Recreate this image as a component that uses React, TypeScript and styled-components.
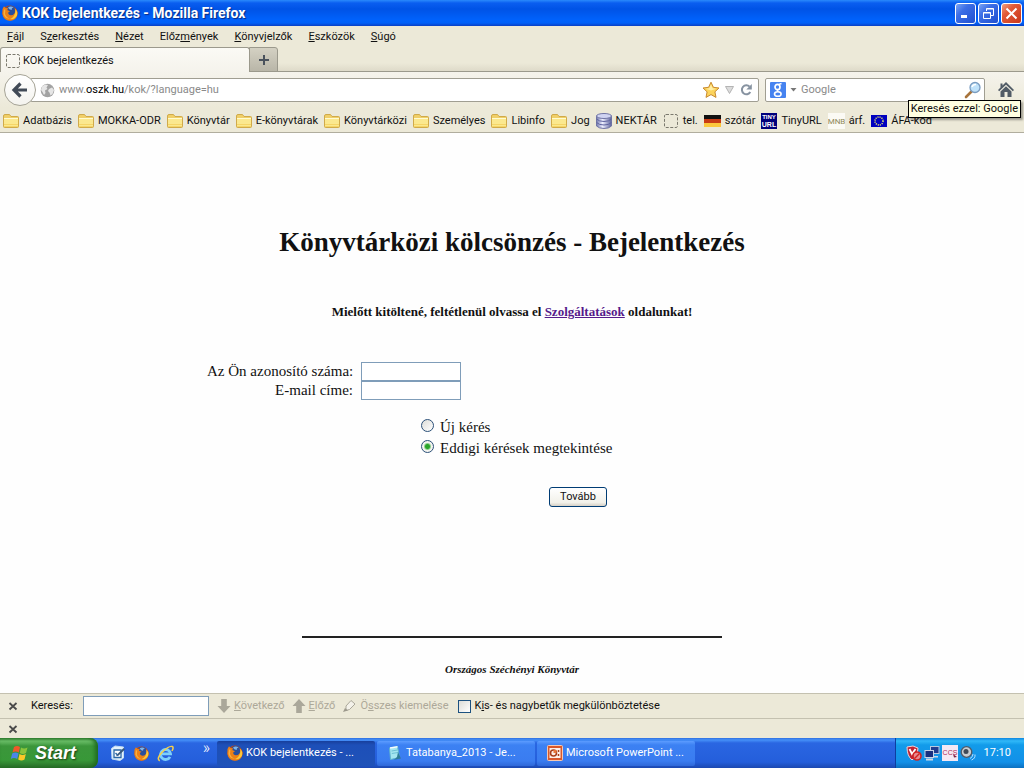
import React from "react";
import styled, { createGlobalStyle, css } from "styled-components";

const ui = `Roboto, "Noto Sans", sans-serif`;
const serif = `"Liberation Serif", serif`;

const GlobalStyle = createGlobalStyle`
  *, *::before, *::after { box-sizing: border-box; }
  body { margin: 0; background: #fefefe; }
  button, input { font: inherit; color: inherit; }
  svg { display: block; flex: none; }
`;

const Screen = styled.div`
  min-height: 100vh;
  display: flex;
  flex-direction: column;
  font: 11px/16px ${ui};
  color: #111;
  overflow-x: hidden;
`;

/* ---------- window frame ---------- */

const TitleBar = styled.header`
  height: 26px;
  display: flex;
  align-items: center;
  gap: 4px;
  padding: 0 2px;
  color: #fff;
  background: linear-gradient(#2a8afc 0, #0a5ef0 3px, #0053e6 9px, #0062fc 20px, #0060f8 23px, #0a3fc4 26px);
`;

const Title = styled.h1`
  flex: 1;
  margin: 0;
  font: bold 14px/20px Roboto, sans-serif;
  text-shadow: 1px 1px 1px #0a2a80;
`;

const WindowButtons = styled.div`
  display: flex;
  gap: 2px;
`;

const WindowButton = styled.button<{ $close?: boolean }>`
  width: 21px;
  height: 21px;
  padding: 0;
  display: grid;
  place-items: center;
  border: 1px solid #fff;
  border-radius: 3px;
  background: ${(p) =>
    p.$close
      ? "linear-gradient(135deg, #f0a080 0, #e25a38 35%, #c8371a 100%)"
      : "linear-gradient(135deg, #7ba5f5 0, #3c6ee6 35%, #1f4fd0 100%)"};
`;

const bare = css`
  border: 0;
  padding: 0;
  background: none;
  text-decoration: none;
  color: inherit;
  white-space: nowrap;
`;

const MenuBar = styled.nav`
  height: 21px;
  display: flex;
  align-items: center;
  gap: 16px;
  padding: 0 7px;
  background: #ece9d8;
`;

const MenuItem = styled.button`
  ${bare}
`;

const TabStrip = styled.div`
  height: 25px;
  display: flex;
  background: linear-gradient(#ece9d8 16px, #dedac9 24px);
  box-shadow: inset 0 -1px #9b998c;
`;

const Tab = styled.button`
  ${bare}
  width: 250px;
  display: flex;
  align-items: center;
  gap: 2px;
  padding: 2px 4px 0;
  text-align: left;
  border: 1px solid #9b998c;
  border-bottom: 0;
  border-radius: 3px 3px 0 0;
  background: linear-gradient(#fbfaf5, #f5f3ec);
`;

const NewTab = styled.button`
  ${bare}
  width: 29px;
  display: grid;
  place-items: center;
  margin-left: -1px;
  border: 1px solid #9b998c;
  border-radius: 0 3px 0 0;
  background: linear-gradient(#d4d1c3, #b9b6a8);
`;

const NavBar = styled.div`
  position: relative;
  height: 36px;
  display: flex;
  align-items: center;
  padding: 0 10px 0 4px;
  background: linear-gradient(#f5f3ec, #ece9d8);
`;

const BackButton = styled.button`
  ${bare}
  position: relative;
  z-index: 1;
  width: 32px;
  height: 32px;
  flex: none;
  display: grid;
  place-items: center;
  margin-right: -6px;
  border: 1px solid #a5a396;
  border-radius: 50%;
  background: linear-gradient(#fff, #f4f3ee);
`;

const Field = styled.div`
  height: 24px;
  display: flex;
  align-items: center;
  border: 1px solid #a09e92;
  border-radius: 2px;
  background: #fff;
`;

const AddressField = styled(Field)`
  flex: 1;
  gap: 4px;
  padding: 0 5px 0 9px;
`;

const Address = styled.div`
  flex: 1;
  color: #8a8a8a;
  b {
    font-weight: normal;
    color: #000;
  }
`;

const SearchField = styled(Field)`
  width: 220px;
  margin-left: 6px;
  padding: 0 2px 0 4px;
  gap: 4px;
`;

const SearchInput = styled.input`
  flex: 1;
  min-width: 0;
  border: 0;
  padding: 0;
  outline: 0;
  background: none;
  &::placeholder { color: #8a8a8a; opacity: 1; }
`;

const IconButton = styled.button`
  ${bare}
  display: grid;
  place-items: center;
`;

const HomeButton = styled(IconButton)`
  margin-left: 13px;
`;

const Tooltip = styled.div`
  position: absolute;
  z-index: 2;
  top: 28px;
  right: 3px;
  padding: 0 2px;
  border: 1px solid #000;
  background: #ffffe1;
  box-shadow: 2px 2px 2px #0005;
  white-space: nowrap;
`;

const BookmarkBar = styled.nav`
  height: 25px;
  display: flex;
  align-items: center;
  gap: 6px;
  padding: 2px 3px 0;
  background: #ece9d8;
  border-bottom: 1px solid #b0ad9e;
`;

const bookmark = css`
  ${bare}
  display: flex;
  align-items: center;
  gap: 4px;
`;

const BookmarkFolder = styled.button`
  ${bookmark}
`;

const BookmarkLink = styled.a`
  ${bookmark}
`;

/* ---------- page ---------- */

const Page = styled.main`
  flex: 1;
  display: flex;
  flex-direction: column;
  align-items: center;
  padding: 92px 8px 16px;
  font: 15px/19px ${serif};
  background: #fefefe;
`;

const Heading = styled.h2`
  margin: 0;
  font-size: 27px;
  line-height: 34px;
`;

const Notice = styled.p`
  margin: 45px 0 42px;
  font-size: 13px;
  line-height: 16px;
  font-weight: bold;
  a { color: #551a8b; }
`;

const LoginForm = styled.form`
  width: 100%;
  max-width: 610px;
  display: flex;
  flex-direction: column;
`;

const Fields = styled.div`
  display: grid;
  grid-template-columns: 146px 100px;
  column-gap: 8px;
  label {
    text-align: right;
    white-space: nowrap;
  }
`;

const TextInput = styled.input`
  height: 19px;
  padding: 1px 3px;
  border: 1px solid #7f9db9;
  background: #fff;
`;

const Choices = styled.div`
  display: flex;
  flex-direction: column;
  gap: 2px;
  margin: 18px 0 0 214px;
`;

const Choice = styled.label`
  display: flex;
  align-items: center;
  gap: 6px;
`;

const Radio = styled.input`
  appearance: none;
  width: 13px;
  height: 13px;
  margin: 0 0 4px;
  border: 1px solid #2b5078;
  border-radius: 50%;
  background: linear-gradient(135deg, #dcdcd7, #fff);
  &:checked {
    background: radial-gradient(circle, #2aa52a 0 2px, #8fd08f 3px, #f4f4f0 4px);
  }
`;

const Submit = styled.button`
  width: 58px;
  height: 20px;
  margin: 29px 0 0 342px;
  padding: 0;
  font: 11px/16px ${ui};
  border: 1px solid #003c74;
  border-radius: 3px;
  background: linear-gradient(#fff, #f2f1ea 80%, #d6d0c5);
`;

const PageFooter = styled.footer`
  width: 100%;
  max-width: 420px;
  margin-top: auto;
  padding-top: 23px;
  border-top: 2px solid #222;
  text-align: center;
  font: italic bold 11px/16px ${serif};
`;

/* ---------- find bar ---------- */

const BottomBar = styled.div<{ $tall?: boolean }>`
  height: ${(p) => (p.$tall ? 25 : 20)}px;
  display: flex;
  align-items: center;
  padding: 0 8px;
  background: #ece9d8;
  border-top: 1px solid #c4c1b0;
`;

const FindLabel = styled.label`
  width: 52px;
  margin-left: 13px;
`;

const FindInput = styled.input`
  width: 126px;
  height: 20px;
  margin-right: 8px;
  padding: 1px 3px;
  border: 1px solid #7f9db9;
  background: #fff;
`;

const FindAction = styled.button`
  ${bare}
  display: flex;
  align-items: center;
  gap: 3px;
  margin-right: 7px;
  color: #aca899;
`;

const CheckLabel = styled.label`
  display: flex;
  align-items: center;
  gap: 4px;
  margin-left: 2px;
`;

const CheckBox = styled.input`
  appearance: none;
  width: 13px;
  height: 13px;
  margin: 0;
  border: 1px solid #1c5180;
  background: linear-gradient(135deg, #dcdcd7, #fff);
`;

/* ---------- taskbar ---------- */

const TaskBar = styled.footer`
  height: 30px;
  display: flex;
  color: #fff;
  background: linear-gradient(#2f6fe0 0, #4590f8 2px, #2a66e2 5px, #245edb 24px, #1c48b0 30px);
`;

const StartButton = styled.button`
  ${bare}
  width: 98px;
  display: flex;
  align-items: center;
  gap: 5px;
  padding: 0 0 0 10px;
  border-radius: 0 8px 8px 0;
  font: italic bold 18px/24px "Liberation Sans", sans-serif;
  text-shadow: 1px 1px 2px #1a3a10;
  background: linear-gradient(#3a8a3a 0, #6cc06a 3px, #3b963b 8px, #389838 22px, #2a6e2a 30px);
  box-shadow: inset -3px 0 4px #1f6a1f;
`;

const QuickLaunch = styled.div`
  width: 119px;
  display: flex;
  align-items: center;
  gap: 8px;
  padding-left: 12px;
`;

const More = styled.span`
  margin: 0 7px 10px auto;
  font-size: 16px;
  font-weight: 300;
`;

const Tasks = styled.div`
  flex: 1;
  min-width: 0;
  display: flex;
  align-items: center;
  gap: 2px;
`;

const Task = styled.button<{ $active?: boolean }>`
  ${bare}
  width: 158px;
  height: 25px;
  display: flex;
  align-items: center;
  gap: 3px;
  padding: 0 10px;
  border-radius: 2px;
  background: ${(p) =>
    p.$active
      ? "linear-gradient(#173f9c, #1d4fb8 4px, #1f52b8)"
      : "linear-gradient(#5c9cff, #3c81f3 4px, #3a7cf0 20px, #2f68d8)"};
`;

const Tray = styled.div`
  width: 129px;
  display: flex;
  align-items: center;
  gap: 2px;
  padding: 0 13px 0 10px;
  border-left: 1px solid #0d3ea0;
  background: linear-gradient(#0e86e0 0, #30b8f8 3px, #129bea 7px, #1290e8 24px, #0c70c0 30px);
  time { margin-left: auto; }
`;

/* ---------- icons ---------- */

const FirefoxIcon = ({ size = 16 }: { size?: number }) => (
  <svg width={size} height={size} viewBox="0 0 16 16">
    <circle cx="8" cy="8" r="7.6" fill="#c8480c" />
    <circle cx="8.6" cy="6.4" r="5.6" fill="#2a4f9c" />
    <path d="M6 2.4Q9 .6 11.6 2.6Q9.4 3 9.6 5Q7 4.600 6 2.400Z" fill="#7fb4e8" />
    <path d="M.5 4L2 1.200L3.600 3L6.200 3.200L5.200 5L8 6.200L6.200 7.400Q6.200 10 9 10.300Q13 10 13.200 6L12.600 3Q16 6 15.600 9Q14.400 15.500 8 15.700Q1.500 15.300.4 9Z" fill="#ec8018" />
    <path d="M13.600 4Q16 7 15 10.500Q12.600 14.800 8 14Q13.500 12 13.600 4Z" fill="#fbc93a" />
    <path d="M2 4.500L3.400 4.800L3 9Q4.500 13 8 13.500Q3 14 1.500 9Z" fill="#f9b040" />
  </svg>
);

const DashedIcon = () => (
  <svg width="16" height="16" viewBox="0 0 16 16">
    <rect x="1.500" y="1.500" width="13" height="13" rx="1.500" fill="none" stroke="#7b796e" strokeDasharray="3 1.500" />
  </svg>
);

const FolderIcon = () => (
  <svg width="16" height="16" viewBox="0 0 16 16">
    <path d="M.5 13.500V3Q.5 1.500 2 1.500H6.500L8 3.500H14.500Q15.500 3.500 15.500 4.500V13.500Q15.500 14.500 14.500 14.500H1.500Q.5 14.500.5 13.500Z" fill="#f0cf68" stroke="#d0aa4a" />
    <path d="M1 6H15V14H1Z" fill="#fbe88f" />
    <path d="M1 5.500H15" stroke="#fffbd0" />
    <path d="M1 13.500H15M1 11.500H15" stroke="#f5d568" />
  </svg>
);

const DatabaseIcon = () => (
  <svg width="16" height="16" viewBox="0 0 16 16">
    <defs>
      <linearGradient id="disk">
        <stop offset="0" stopColor="#7278ae" />
        <stop offset=".4" stopColor="#eef0ff" />
        <stop offset="1" stopColor="#5c629c" />
      </linearGradient>
    </defs>
    <path d="M.5 3V13Q3 15.500 8 15.500T15.500 13V3Z" fill="url(#disk)" stroke="#7075a4" />
    <ellipse cx="8" cy="3" rx="7.500" ry="2.500" fill="#d0d4f2" stroke="#7075a4" />
    <path d="M.5 6Q3 8.500 8 8.500T15.500 6M.5 9.500Q3 12 8 12T15.500 9.500" fill="none" stroke="#6065a0" />
  </svg>
);

const GermanFlag = () => (
  <svg width="17" height="16" viewBox="0 0 17 16">
    <rect y="2" width="17" height="4" fill="#111" />
    <rect y="6" width="17" height="4" fill="#c83c14" />
    <rect y="10" width="17" height="4" fill="#fbc83c" />
  </svg>
);

const TinyUrlIcon = () => (
  <svg width="16" height="16" viewBox="0 0 16 16" fontFamily="Liberation Sans" fontWeight="bold" fontSize="7" fill="#fff" textAnchor="middle">
    <rect width="16" height="16" fill="#00007c" />
    <text x="8" y="6" fontSize="6">TINY</text>
    <text x="8" y="14">URL</text>
  </svg>
);

const MnbIcon = () => (
  <svg width="17" height="16" viewBox="0 0 17 16" fontFamily="Roboto" fontSize="8" fill="#8f8858" textAnchor="middle">
    <rect width="17" height="16" fill="#fbfaf4" />
    <text x="8.500" y="11">MNB</text>
  </svg>
);

const EuFlag = () => (
  <svg width="16" height="16" viewBox="0 0 16 16">
    <rect y="2" width="16" height="12" fill="#0000c0" />
    <circle cx="8" cy="8" r="4" fill="none" stroke="#e8e86c" strokeWidth="1.500" strokeDasharray="1.100 1" />
  </svg>
);

const GlobeIcon = () => (
  <svg width="15" height="15" viewBox="0 0 15 15">
    <circle cx="7.500" cy="7.500" r="6.800" fill="#a2a2a2" />
    <path d="M2 3.500L5 1.500L8 2L6.500 4.500L7.500 6L5 7.500L5.500 10L4 12L2.500 9L1 7ZM9 6L12 4.500L14 7L12.500 11L10.500 12.500L9.500 9.500L8 8Z" fill="#e6e6e6" />
  </svg>
);

const BackIcon = () => (
  <svg width="18" height="18" viewBox="0 0 18 18">
    <path d="M9.500 2.500L3 9L9.500 15.500M3.500 9H16" fill="none" stroke="#414a56" strokeWidth="3.200" />
  </svg>
);

const StarIcon = () => (
  <svg width="18" height="18" viewBox="0 0 18 18">
    <path d="M9 1.200L11.400 6.300L17 7L12.900 10.800L14 16.400L9 13.600L4 16.400L5.100 10.800L1 7L6.600 6.300Z" fill="#fcd45c" stroke="#c98a2e" strokeLinejoin="round" />
    <path d="M9 3.500L10.500 7.200L14 7.800L9 9.500L4 7.800L7.400 7.200Z" fill="#ffefa8" />
  </svg>
);

const DropIcon = () => (
  <svg width="11" height="10" viewBox="0 0 11 10">
    <path d="M1.500 1.500H9.500L5.500 8.500Z" fill="#dcdcdc" stroke="#b4b4b4" />
  </svg>
);

const ReloadIcon = () => (
  <svg width="14" height="14" viewBox="0 0 14 14">
    <path d="M10.600 3.600A4.500 4.500 0 1 0 11.300 9" fill="none" stroke="#8793a1" strokeWidth="2" />
    <path d="M12.800 1V6.500H7.300Z" fill="#8793a1" />
  </svg>
);

const GoogleIcon = () => (
  <svg width="16" height="16" viewBox="0 0 16 16">
    <rect width="16" height="16" rx="1" fill="#4683f0" />
    <ellipse cx="7.500" cy="5" rx="2.500" ry="2.700" fill="none" stroke="#fff" strokeWidth="1.700" />
    <path d="M9 2.400L11.500 1.500M8.600 7.300Q6 8.300 8.400 9.400" fill="none" stroke="#fff" strokeWidth="1.400" />
    <ellipse cx="7.800" cy="12" rx="3.300" ry="2.300" fill="none" stroke="#fff" strokeWidth="1.600" />
  </svg>
);

const CaretIcon = () => (
  <svg width="7" height="4" viewBox="0 0 7 4">
    <path d="M.5 0H6.500L3.500 3.500Z" fill="#777" />
  </svg>
);

const MagnifierIcon = () => (
  <svg width="18" height="18" viewBox="0 0 18 18">
    <path d="M7.500 10.500L2 16" stroke="#a8743c" strokeWidth="2.600" strokeLinecap="round" />
    <circle cx="11" cy="6.500" r="5" fill="#bfe2fa" stroke="#7a9cc0" strokeWidth="1.300" />
    <path d="M8 6Q9 3.500 12 3.600" fill="none" stroke="#fff" strokeWidth="1.500" />
  </svg>
);

const HomeIcon = () => (
  <svg width="16" height="16" viewBox="0 0 16 16">
    <path d="M8 0L16 8L14.800 9.300L8 2.800L1.200 9.300L0 8L2.500 5.500V1.500H4.500V3.500Z" fill="#515b66" />
    <path d="M8 4.300L13.500 9.500V15H9.500V10H6.500V15H2.500V9.500Z" fill="#515b66" />
  </svg>
);

const CloseIcon = () => (
  <svg width="10" height="10" viewBox="0 0 10 10">
    <path d="M1.500 2L8.500 8.500M8.500 2L1.500 8.500" stroke="#4a4a4a" strokeWidth="1.800" />
  </svg>
);

const ArrowIcon = ({ up }: { up?: boolean }) => (
  <svg width="14" height="14" viewBox="0 0 14 14">
    <path d={up ? "M7 0L13.500 7H9.800V14H4.200V7H.5Z" : "M7 14L.5 7H4.200V0H9.800V7H13.500Z"} fill="#aaa79a" />
  </svg>
);

const MarkerIcon = () => (
  <svg width="15" height="14" viewBox="0 0 15 14">
    <path d="M4 7L9 1.500L13 5L7.500 10.500L4 11.500Z" fill="#f4f2ea" stroke="#aaa79a" />
    <path d="M1 13L3 9L6 11.500Z" fill="#9c998c" />
  </svg>
);

const WindowsIcon = () => (
  <svg width="20" height="20" viewBox="0 0 20 20">
    <path d="M4 4Q7 2 10 4L8.800 9.500Q5.500 7.500 2.500 9.500Z" fill="#f0582a" />
    <path d="M11 4.500Q14 6.500 17.500 4.500L16 10Q13 12 9.800 10Z" fill="#8ac43c" />
    <path d="M2.200 10.500Q5.500 8.500 8.500 10.500L7.200 16Q4 14 .8 16Z" fill="#4a86e8" />
    <path d="M9.500 11Q12.500 13 15.800 11L14.500 16.500Q11.500 18.500 8.200 16.500Z" fill="#fbc828" />
  </svg>
);

const DesktopIcon = () => (
  <svg width="16" height="16" viewBox="0 0 16 16">
    <path d="M1.500 3.500L5 1L13.500 2V13L10 15.500L2 14Z" fill="#e4f2fc" stroke="#c0dcf4" />
    <path d="M4 5H11V12.500H4Z" fill="#fff" stroke="#2a68a8" strokeWidth="1.300" />
    <path d="M6 10.500L13.500 3L15 4.500L8 11Z" fill="#38587c" />
    <path d="M5.500 8L7.500 10" stroke="#2a68a8" strokeWidth="1.500" />
  </svg>
);

const IeIcon = () => (
  <svg width="17" height="17" viewBox="0 0 17 17">
    <path d="M13 11.800A5 5 0 1 1 13.500 8.800H5" fill="none" stroke="#7cd0fc" strokeWidth="2.800" />
    <path d="M2.800 15.800Q-1 14 5 7.200Q12 .5 15.300 1.500Q17 2.500 15 6" fill="none" stroke="#f8d048" strokeWidth="1.500" />
  </svg>
);

const NotepadIcon = () => (
  <svg width="16" height="16" viewBox="0 0 16 16">
    <path d="M2.500 3L10.500 1.500L12.500 12.500L3.500 14.500Z" fill="#a4e6f0" stroke="#5fb4cc" />
    <path d="M3 3L10.500 1.700" stroke="#f4fcff" strokeWidth="1.500" />
    <path d="M4.500 6L10.500 5M4.800 8.500L11 7.500" stroke="#6cc0d4" />
    <path d="M11 7L14 13.500L7 14.800L10 12Z" fill="#2f7c98" />
  </svg>
);

const PowerPointIcon = () => (
  <svg width="16" height="16" viewBox="0 0 16 16">
    <rect x=".5" y=".5" width="15" height="15" rx="1" fill="#d8582c" stroke="#f8c8b0" />
    <rect x="2.500" y="3" width="11" height="10" fill="#fdf0e8" />
    <circle cx="6.500" cy="8" r="3" fill="none" stroke="#a8401c" strokeWidth="1.600" />
    <path d="M6.500 8V5H9.500V8Z" fill="#e8793c" />
    <path d="M11.500 5V7M11.500 9V11" stroke="#a8401c" strokeWidth="1.500" />
  </svg>
);

const ShieldIcon = () => (
  <svg width="16" height="16" viewBox="0 0 16 16">
    <path d="M1 2L7 1L12 3L11 10L6 15Q1 11 1 2Z" fill="#c02434" stroke="#f0d4d8" />
    <path d="M3.500 4L6 9L9.500 4" fill="none" stroke="#fff" strokeWidth="1.800" />
    <circle cx="11" cy="11" r="4" fill="#e88a90" stroke="#d02424" strokeWidth="1.600" />
    <path d="M8.500 13.500L13.500 8.500" stroke="#d02424" strokeWidth="1.500" />
  </svg>
);

const NetworkIcon = () => (
  <svg width="16" height="16" viewBox="0 0 16 16">
    <rect x="6.500" y="1.500" width="8.500" height="7" fill="#203c90" stroke="#b8c8e0" />
    <path d="M9 11H14V12.500H9Z" fill="#d0d8e4" />
    <rect x="1" y="5.500" width="8.500" height="7" fill="#183080" stroke="#c8d4e8" />
    <path d="M2 14.500H9" stroke="#d0d8e4" strokeWidth="2" />
  </svg>
);

const CcsIcon = () => (
  <svg width="16" height="16" viewBox="0 0 16 16" fontFamily="Liberation Sans" fontSize="7" fill="#b02c54" textAnchor="middle">
    <rect width="16" height="16" fill="#f4e8f4" />
    <text x="8" y="10">CCS</text>
    <path d="M11 9L15 12L12 12.500Z" fill="#802040" />
  </svg>
);

const SpeakerIcon = () => (
  <svg width="16" height="16" viewBox="0 0 16 16">
    <circle cx="6.500" cy="7" r="5.300" fill="#c8ccd0" stroke="#505a68" strokeWidth="1.300" />
    <circle cx="6" cy="6.500" r="2.500" fill="#404a58" />
    <path d="M10 13.500Q13 12 13 9M11.500 15Q15.500 13.500 15 9.500" fill="none" stroke="#b8e0ff" />
  </svg>
);

/* ---------- data ---------- */

/* each menu name is split around its access key */
const menus = [
  ["", "F", "ájl"],
  ["S", "z", "erkesztés"],
  ["", "N", "ézet"],
  ["Előz", "m", "ények"],
  ["", "K", "önyvjelzők"],
  ["", "E", "szközök"],
  ["", "S", "úgó"],
];

const folders = ["Adatbázis", "MOKKA-ODR", "Könyvtár", "E-könyvtárak", "Könyvtárközi", "Személyes", "Libinfo", "Jog"];

const links = [
  { name: "NEKTÁR", Icon: DatabaseIcon },
  { name: "tel.", Icon: DashedIcon },
  { name: "szótár", Icon: GermanFlag },
  { name: "TinyURL", Icon: TinyUrlIcon },
  { name: "árf.", Icon: MnbIcon },
  { name: "ÁFA-kód", Icon: EuFlag },
];

export default function App() {
  return (
    <Screen>
      <GlobalStyle />
      <TitleBar>
        <FirefoxIcon />
        <Title>KOK bejelentkezés - Mozilla Firefox</Title>
        <WindowButtons>
          <WindowButton aria-label="Kis méret">
            <svg width="13" height="13"><path d="M2 9.500H8" stroke="#fff" strokeWidth="3" /></svg>
          </WindowButton>
          <WindowButton aria-label="Előző méret">
            <svg width="13" height="13" fill="none" stroke="#fff">
              <path d="M4.500 4V1.500H11.500V8.500H9M4.500 2H11.500M1.500 5.500H8.500V11.500H1.500ZM1.500 6H8.500" />
            </svg>
          </WindowButton>
          <WindowButton $close aria-label="Bezárás">
            <svg width="13" height="13"><path d="M1.500 1.500L11.500 11.500M11.500 1.500L1.500 11.500" stroke="#fff" strokeWidth="2" /></svg>
          </WindowButton>
        </WindowButtons>
      </TitleBar>

      <MenuBar>
        {menus.map(([before, key, after]) => (
          <MenuItem key={before + key + after}>{before}<u>{key}</u>{after}</MenuItem>
        ))}
      </MenuBar>

      <TabStrip>
        <Tab><DashedIcon />KOK bejelentkezés</Tab>
        <NewTab aria-label="Új lap">
          <svg width="12" height="12"><path d="M6 1V11M1 6H11" stroke="#4a525c" strokeWidth="2" /></svg>
        </NewTab>
      </TabStrip>

      <NavBar>
        <BackButton aria-label="Vissza"><BackIcon /></BackButton>
        <AddressField>
          <GlobeIcon />
          <Address>www.<b>oszk.hu</b>/kok/?language=hu</Address>
          <IconButton aria-label="Könyvjelzőzés"><StarIcon /></IconButton>
          <DropIcon />
          <IconButton aria-label="Frissítés"><ReloadIcon /></IconButton>
        </AddressField>
        <SearchField>
          <GoogleIcon />
          <CaretIcon />
          <SearchInput aria-label="Keresés" placeholder="Google" />
          <IconButton aria-label="Keresés ezzel"><MagnifierIcon /></IconButton>
        </SearchField>
        <HomeButton aria-label="Kezdőlap"><HomeIcon /></HomeButton>
        <Tooltip role="tooltip">Keresés ezzel: Google</Tooltip>
      </NavBar>

      <BookmarkBar>
        {folders.map((name) => (
          <BookmarkFolder key={name}><FolderIcon />{name}</BookmarkFolder>
        ))}
        {links.map(({ name, Icon }) => (
          <BookmarkLink key={name} href="#"><Icon />{name}</BookmarkLink>
        ))}
      </BookmarkBar>

      <Page>
        <Heading>Könyvtárközi kölcsönzés - Bejelentkezés</Heading>
        <Notice>Mielőtt kitöltené, feltétlenül olvassa el <a href="#">Szolgáltatások</a> oldalunkat!</Notice>
        <LoginForm>
          <Fields>
            <label htmlFor="card">Az Ön azonosító száma:</label>
            <TextInput id="card" />
            <label htmlFor="email">E-mail címe:</label>
            <TextInput id="email" />
          </Fields>
          <Choices>
            <Choice><Radio type="radio" name="task" />Új kérés</Choice>
            <Choice><Radio type="radio" name="task" defaultChecked />Eddigi kérések megtekintése</Choice>
          </Choices>
          <Submit type="button">Tovább</Submit>
        </LoginForm>
        <PageFooter>Országos Széchényi Könyvtár</PageFooter>
      </Page>

      <BottomBar $tall>
        <IconButton aria-label="Keresősáv bezárása"><CloseIcon /></IconButton>
        <FindLabel htmlFor="find">Keresés:</FindLabel>
        <FindInput id="find" />
        <FindAction><ArrowIcon /><span><u>K</u>övetkező</span></FindAction>
        <FindAction><ArrowIcon up /><span><u>E</u>lőző</span></FindAction>
        <FindAction><MarkerIcon /><span>Ö<u>s</u>szes kiemelése</span></FindAction>
        <CheckLabel><CheckBox type="checkbox" /><span>K<u>i</u>s- és nagybetűk megkülönböztetése</span></CheckLabel>
      </BottomBar>
      <BottomBar>
        <IconButton aria-label="Bővítménysáv bezárása"><CloseIcon /></IconButton>
      </BottomBar>

      <TaskBar>
        <StartButton><WindowsIcon />Start</StartButton>
        <QuickLaunch>
          <IconButton aria-label="Asztal"><DesktopIcon /></IconButton>
          <IconButton aria-label="Firefox"><FirefoxIcon size={15} /></IconButton>
          <IconButton aria-label="Internet Explorer"><IeIcon /></IconButton>
          <More>»</More>
        </QuickLaunch>
        <Tasks>
          <Task $active><FirefoxIcon />KOK bejelentkezés - ...</Task>
          <Task><NotepadIcon />Tatabanya_2013 - Je...</Task>
          <Task><PowerPointIcon />Microsoft PowerPoint ...</Task>
        </Tasks>
        <Tray>
          <ShieldIcon />
          <NetworkIcon />
          <CcsIcon />
          <SpeakerIcon />
          <time>17:10</time>
        </Tray>
      </TaskBar>
    </Screen>
  );
}
